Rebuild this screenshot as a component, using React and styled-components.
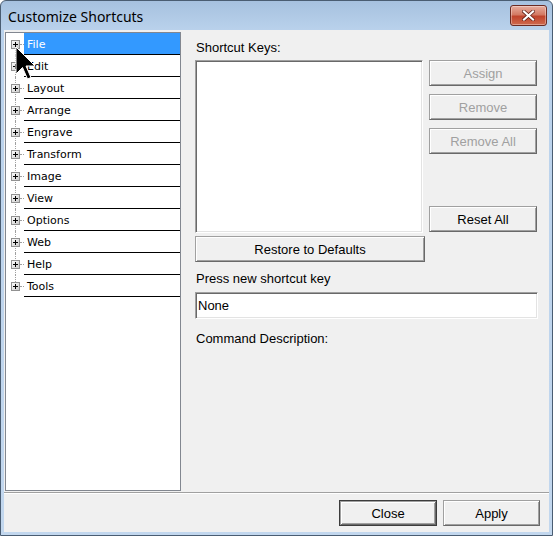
import React from 'react'
import styled, { createGlobalStyle, css } from 'styled-components'

const GlobalStyle = createGlobalStyle`
  html, body {
    margin: 0;
    padding: 0;
    background: #ffffff;
  }
  * {
    box-sizing: border-box;
  }
`

const categories = ['File', 'Edit', 'Layout', 'Arrange', 'Engrave', 'Transform', 'Image', 'View', 'Options', 'Web', 'Help', 'Tools']

function PlusBox() {
  return (
    <svg width="9" height="9" viewBox="0 0 9 9">
      <defs>
        <linearGradient id="pb" x1="0" y1="0" x2="1" y2="1">
          <stop offset="0" stopColor="#ffffff" />
          <stop offset="1" stopColor="#c8c8c8" />
        </linearGradient>
      </defs>
      <rect x="0.5" y="0.5" width="8" height="8" fill="url(#pb)" stroke="#919191" />
      <path d="M2 4.5h5M4.5 2v5" stroke="#000" strokeWidth="1" />
    </svg>
  )
}

function Cursor() {
  return (
    <svg width="22" height="35" viewBox="0 0 22 35">
      <path
        d="M1 1 L1 28 L7.5 21.5 L12.5 33 L16 31.5 L11 20 L20 20 Z"
        fill="#000"
        stroke="#fff"
        strokeWidth="1"
        strokeLinejoin="miter"
      />
    </svg>
  )
}

function App() {
  return (
    <>
      <GlobalStyle />
      <Window>
        <TitleBar>
          <Title>Customize Shortcuts</Title>
          <CloseBox>
            <svg width="13" height="11" viewBox="0 0 13 11">
              <path d="M2 1.5 L11 9.5 M11 1.5 L2 9.5" stroke="#5a1a12" strokeWidth="3.6" strokeLinecap="square" />
              <path d="M2 1.5 L11 9.5 M11 1.5 L2 9.5" stroke="#fff" strokeWidth="2.2" strokeLinecap="square" />
            </svg>
          </CloseBox>
        </TitleBar>
        <Client>
          <Main>
            <Tree>
              {categories.map((name, i) => (
                <Row key={name}>
                  <Expander $first={i === 0} $last={i === categories.length - 1}>
                    <BoxSpot>
                      <PlusBox />
                    </BoxSpot>
                  </Expander>
                  <Label $selected={i === 0}>{name}</Label>
                </Row>
              ))}
              <CursorSpot>
                <Cursor />
              </CursorSpot>
            </Tree>
            <Side>
              <Caption $top={8}>Shortcut Keys:</Caption>
              <KeysRow>
                <ListBox />
                <ButtonColumn>
                  <Button $w={108} disabled>Assign</Button>
                  <Button $w={108} disabled>Remove</Button>
                  <Button $w={108} disabled>Remove All</Button>
                  <Spacer />
                  <Button $w={108}>Reset All</Button>
                </ButtonColumn>
              </KeysRow>
              <Button $w={230} style={{ marginTop: 3 }}>Restore to Defaults</Button>
              <Caption $top={9}>Press new shortcut key</Caption>
              <Field>None</Field>
              <Caption $top={12}>Command Description:</Caption>
            </Side>
          </Main>
          <Separator />
          <Footer>
            <Button $w={98} $default>Close</Button>
            <Button $w={97}>Apply</Button>
          </Footer>
        </Client>
      </Window>
    </>
  )
}

export default App

const Window = styled.div`
  width: 553px;
  height: 536px;
  display: flex;
  flex-direction: column;
  background: linear-gradient(#a6c1df, #bad2ec 30px, #c2d7ee);
  border: 1px solid #4a5d72;
  border-radius: 6px 6px 0 0;
  padding: 0 3px 3px 3px;
`

const TitleBar = styled.div`
  height: 29px;
  flex: none;
  display: flex;
  align-items: center;
  justify-content: space-between;
  padding: 0 2px 0 4px;
`

const Title = styled.div`
  padding-top: 2px;
  font-family: "Noto Sans", "Open Sans", sans-serif;
  font-size: 14px;
  color: #000;
`

const CloseBox = styled.div`
  width: 37px;
  height: 21px;
  display: flex;
  align-items: center;
  justify-content: center;
  border: 1px solid #6b2a22;
  border-radius: 3px;
  background: linear-gradient(#e8ad9e, #d37a64 45%, #c0442c 55%, #cf6a4e);
  box-shadow: inset 0 0 0 1px rgba(255, 255, 255, 0.35);
`

const Client = styled.div`
  flex: 1;
  display: flex;
  flex-direction: column;
  background: #f0f0f0;
`

const Main = styled.div`
  display: flex;
  padding: 2px 0 0 1px;
  height: 461px;
`

const Tree = styled.div`
  position: relative;
  width: 176px;
  height: 459px;
  flex: none;
  background: #fff;
  border: 1px solid #828790;
`

const Row = styled.div`
  display: flex;
  height: 22px;
`

const Expander = styled.div`
  position: relative;
  width: 18px;
  flex: none;
  &::before {
    content: '';
    position: absolute;
    left: 9px;
    top: ${p => (p.$first ? 11 : 0)}px;
    bottom: ${p => (p.$last ? 11 : 0)}px;
    border-left: 1px dotted #a0a0a0;
  }
  &::after {
    content: '';
    position: absolute;
    left: 14px;
    width: 4px;
    top: 11px;
    border-top: 1px dotted #a0a0a0;
  }
`

const BoxSpot = styled.div`
  position: absolute;
  left: 5px;
  top: 7px;
  width: 9px;
  height: 9px;
  z-index: 1;
  svg {
    display: block;
  }
`

const Label = styled.div`
  flex: 1;
  height: 22px;
  padding: 1px 0 0 3px;
  line-height: 21px;
  border-bottom: 1px solid #000;
  font-family: "DejaVu Sans", Verdana, sans-serif;
  font-size: 11px;
  color: #000;
  overflow: hidden;
  ${p =>
    p.$selected &&
    css`
      background: #3399ff;
      color: #fff;
    `}
`

const CursorSpot = styled.div`
  position: absolute;
  left: 9px;
  top: 13px;
  z-index: 2;
  svg {
    display: block;
  }
`

const Side = styled.div`
  margin-left: 14px;
  display: flex;
  flex-direction: column;
  align-items: flex-start;
`

const Caption = styled.div`
  margin-top: ${p => p.$top}px;
  padding-left: 1px;
  height: 16px;
  line-height: 16px;
  font-family: "Liberation Sans", Arial, sans-serif;
  font-size: 13px;
  color: #000;
`

const sunken = css`
  background: #fff;
  border: 1px solid;
  border-color: #a0a0a0 #ffffff #ffffff #a0a0a0;
  box-shadow: inset 1px 1px #696969, inset -1px -1px #e3e3e3;
`

const KeysRow = styled.div`
  display: flex;
  margin-top: 4px;
`

const ListBox = styled.div`
  ${sunken};
  width: 228px;
  height: 173px;
`

const ButtonColumn = styled.div`
  display: flex;
  flex-direction: column;
  gap: 8px;
  margin-left: 6px;
  height: 172px;
`

const Spacer = styled.div`
  flex: 1;
  margin-bottom: 8px;
`

const Button = styled.button`
  width: ${p => p.$w}px;
  height: 26px;
  flex: none;
  padding: 0;
  font-family: "Liberation Sans", Arial, sans-serif;
  font-size: 13px;
  color: #000;
  background: #f0f0f0;
  border: 1px solid;
  border-color: #a0a0a0 #696969 #696969 #a0a0a0;
  box-shadow: inset 1px 1px #ffffff, inset -1px -1px #a0a0a0;
  &:disabled {
    color: #a0a0a0;
  }
  ${p =>
    p.$default &&
    css`
      border-color: #3c3c3c;
      box-shadow: inset 1px 1px #a0a0a0, inset -1px -1px #696969, inset 2px 2px #ffffff, inset -2px -2px #a0a0a0;
    `}
`

const Field = styled.div`
  ${sunken};
  margin-top: 5px;
  width: 343px;
  height: 27px;
  padding-left: 2px;
  line-height: 25px;
  font-family: "Liberation Sans", Arial, sans-serif;
  font-size: 13px;
  color: #000;
`

const Separator = styled.div`
  margin-top: 1px;
  border-top: 1px solid #a0a0a0;
  border-bottom: 1px solid #ffffff;
`

const Footer = styled.div`
  display: flex;
  justify-content: flex-end;
  gap: 6px;
  padding: 6px 9px 0 0;
`
